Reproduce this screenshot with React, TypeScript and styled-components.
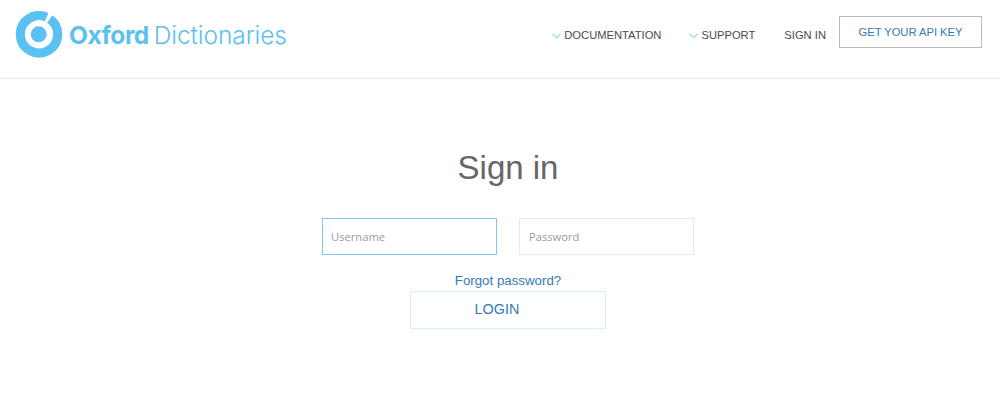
import React from "react";
import styled, { createGlobalStyle } from "styled-components";

const Global = createGlobalStyle`
  html, body { margin: 0; padding: 0; background: #fff; }
  body { font-family: "Liberation Sans", Arial, sans-serif; }
`;

const Page = styled.div`
  width: 1000px;
  height: 418px;
  overflow: hidden;
  background: #fff;
`;

const Header = styled.header`
  height: 78px;
  box-sizing: content-box;
  border-bottom: 1px solid #e9e9e9;
  display: flex;
  align-items: flex-start;
  justify-content: space-between;
  padding-left: 15px;
  padding-right: 18px;
`;

const Logo = styled.a`
  display: flex;
  align-items: center;
  gap: 6px;
  height: 70px;
  color: #5bc0f2;
`;

const Wordmark = styled.span`
  font-family: "Inter", sans-serif;
  font-size: 24.5px;
  line-height: 1;
  white-space: nowrap;
  font-weight: 300;
  letter-spacing: -0.08px;
`;

const WordmarkBold = styled.span`
  font-weight: 700;
  letter-spacing: -0.45px;
  margin-right: 5px;
`;

const Nav = styled.nav`
  display: flex;
  align-items: flex-start;
  padding-top: 16px;
`;

const NavItem = styled.a<{ $gap: number }>`
  display: flex;
  align-items: center;
  gap: 3px;
  height: 38px;
  box-sizing: border-box;
  margin-right: ${(p) => p.$gap}px;
  font-size: 11.2px;
  color: #4a4a4a;
  white-space: nowrap;
`;

const Chevron = styled.svg`
  width: 9px;
  height: 6px;
  flex: none;
  margin-top: 1px;
`;

const ApiButton = styled.a`
  box-sizing: border-box;
  width: 143px;
  height: 32px;
  display: flex;
  align-items: center;
  justify-content: center;
  border: 1px solid #b9b9b9;
  font-size: 11.2px;
  color: #337ab7;
  white-space: nowrap;
`;

const Main = styled.main`
  display: flex;
  flex-direction: column;
  align-items: center;
  padding-left: 16px;
`;

const Title = styled.h1`
  margin: 69px 0 0;
  font-size: 33px;
  line-height: 40px;
  font-weight: 400;
  color: #666;
`;

const Fields = styled.form`
  display: flex;
  gap: 22px;
  margin-top: 30px;
`;

const Field = styled.input<{ $focused?: boolean }>`
  box-sizing: border-box;
  width: 175px;
  height: 37px;
  padding: 0 ${(p) => (p.$focused ? 8 : 9)}px;
  border: 1px solid ${(p) => (p.$focused ? "#7fcbf3" : "#eaeaea")};
  border-radius: 0;
  outline: none;
  background: #fff;
  font-family: "Open Sans", sans-serif;
  font-size: 11.2px;
  color: #555;
  &::placeholder { color: #9a9a9a; opacity: 1; }
`;

const Forgot = styled.a`
  margin-top: 16px;
  font-size: 13.3px;
  line-height: 20px;
  color: #337ab7;
`;

const Login = styled.button`
  box-sizing: border-box;
  width: 196px;
  height: 38px;
  background: #fff;
  border: 1px solid #d5f0fc;
  border-radius: 0;
  font-family: "Liberation Sans", Arial, sans-serif;
  font-size: 14.4px;
  color: #337ab7;
  padding: 0 22px 2px 0;
`;

const Mark = () => (
  <svg width="48" height="48" viewBox="0 0 48 48" aria-hidden="true">
    <path
      d="M34.73 7.98 A18.7 18.7 0 1 1 31.61 6.22"
      fill="none"
      stroke="#5bc0f2"
      strokeWidth="9.2"
    />
    <circle cx="23.7" cy="23.3" r="8" fill="#5bc0f2" />
  </svg>
);

const Down = () => (
  <Chevron viewBox="0 0 9 6" aria-hidden="true">
    <path d="M0.5 0.8 L4.5 4.8 L8.5 0.8" fill="none" stroke="#8fd3f5" strokeWidth="1.1" />
  </Chevron>
);

export default function App() {
  return (
    <Page>
      <Global />
      <Header>
        <Logo>
          <Mark />
          <Wordmark>
            <WordmarkBold>Oxford</WordmarkBold>Dictionaries
          </Wordmark>
        </Logo>
        <Nav>
          <NavItem $gap={28}><Down />DOCUMENTATION</NavItem>
          <NavItem $gap={29}><Down />SUPPORT</NavItem>
          <NavItem $gap={13}>SIGN IN</NavItem>
          <ApiButton>GET YOUR API KEY</ApiButton>
        </Nav>
      </Header>
      <Main>
        <Title>Sign in</Title>
        <Fields>
          <Field $focused placeholder="Username" />
          <Field placeholder="Password" />
        </Fields>
        <Forgot>Forgot password?</Forgot>
        <Login>LOGIN</Login>
      </Main>
    </Page>
  );
}
